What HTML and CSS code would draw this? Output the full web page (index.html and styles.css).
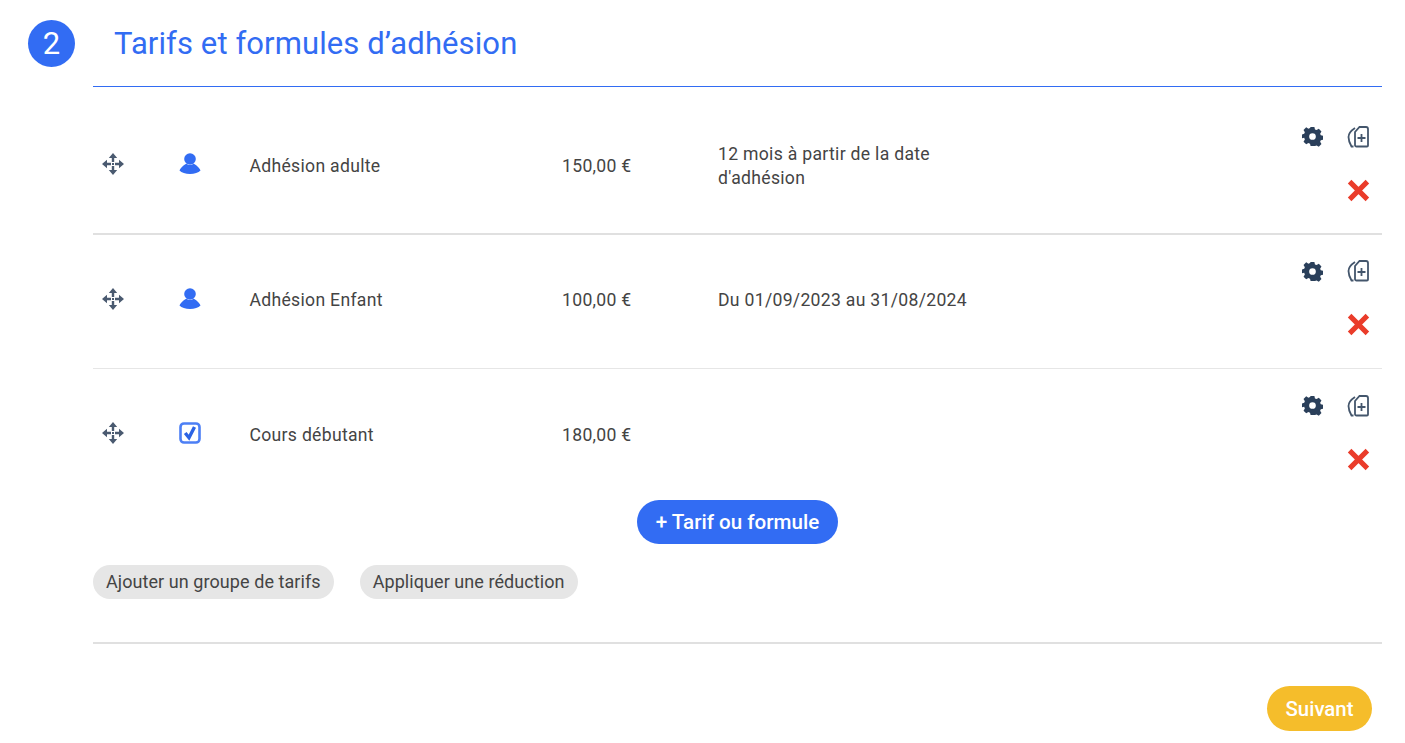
FILE: index.html
```html
<!DOCTYPE html>
<html lang="fr">
<head>
<meta charset="utf-8">
<title>Tarifs</title>
<link rel="stylesheet" href="styles.css">
</head>
<body>
<svg class="defs" width="0" height="0">
  <defs>
    <symbol id="move" viewBox="0 0 22 22">
      <path d="M11 0l4.200 5H6.800zM11 22l-4.200-5h8.400zM0 11l5-4.200v8.400zM22 11l-5 4.200V6.800z" fill="#4a5a70"/>
      <path d="M11 4v5M11 13v5M4 11h5M13 11h5" stroke="#4a5a70" stroke-width="2.400" fill="none"/>
      <rect x="10" y="10" width="2" height="2" fill="#4a5a70"/>
    </symbol>
    <symbol id="user" viewBox="0 0 22 22">
      <circle cx="11" cy="6" r="5.800" fill="#326cf3"/>
      <path d="M7.500 10.500C3.500 13 1 15.500.5 17.500c2 2 6 3.500 10.500 3.500s8.500-1.500 10.500-3.500C21 15.500 18.500 13 14.500 10.500c-1 1-2.200 1.500-3.500 1.500S8.500 11.500 7.500 10.500z" fill="#326cf3"/>
    </symbol>
    <symbol id="check" viewBox="0 0 22 22">
      <rect x="1.500" y="1.500" width="19" height="19" rx="3.500" fill="none" stroke="#4c7ff5" stroke-width="2.600"/>
      <path d="M6.200 11l3.800 4.700L15.500 5" fill="none" stroke="#2c63e4" stroke-width="3.400"/>
    </symbol>
    <symbol id="gear" viewBox="0 0 22 22">
      <path fill="#2a3f5a" fill-rule="evenodd" d="M9 1h4l.6 2.600 1.700.7 2.300-1.400 2.800 2.800-1.400 2.300.7 1.700 2.300.6v4l-2.300.6-.7 1.700 1.400 2.300-2.800 2.800-2.300-1.400-1.700.7L13 21H9l-.6-2.500-1.700-.7-2.300 1.400-2.800-2.800 1.400-2.300-.7-1.700L0 12.800v-4l2.300-.6.7-1.700-1.400-2.300 2.800-2.800 2.300 1.400 1.700-.7zM11 7.500a3.500 3.500 0 1 0 0 7 3.500 3.500 0 0 0 0-7z"/>
    </symbol>
    <symbol id="copy" viewBox="0 0 22 22">
      <path d="M12 1h6.500a2 2 0 0 1 2 2v16.500a1 1 0 0 1-1 1H9a1.500 1.500 0 0 1-1.500-1.500V6z" fill="none" stroke="#44566c" stroke-width="1.800"/>
      <path d="M7.500 2C3 5 1 8 1 11s1 6 3 9.500h2" fill="none" stroke="#44566c" stroke-width="1.800"/>
      <path d="M14 8v8M10 12h8" stroke="#44566c" stroke-width="1.800"/>
    </symbol>
    <symbol id="cross" viewBox="0 0 22 22">
      <path d="M2.500 2.500l17 17M19.500 2.500l-17 17" stroke="#ea3c2a" stroke-width="4.800" fill="none"/>
    </symbol>
  </defs>
</svg>
<main class="page">
  <header class="head">
    <span class="step">2</span>
    <h1 class="title">Tarifs et formules d’adhésion</h1>
  </header>
  <section class="content">
    <div class="row row-first">
      <svg class="i-move"><use href="#move"/></svg>
      <svg class="i-type"><use href="#user"/></svg>
      <span class="name">Adhésion adulte</span>
      <span class="price">150,00 €</span>
      <span class="desc">12 mois à partir de la date d'adhésion</span>
      <div class="acts"><svg class="i-gear"><use href="#gear"/></svg><svg class="i-copy"><use href="#copy"/></svg><svg class="i-cross"><use href="#cross"/></svg></div>
    </div>
    <div class="row row-light">
      <svg class="i-move"><use href="#move"/></svg>
      <svg class="i-type"><use href="#user"/></svg>
      <span class="name">Adhésion Enfant</span>
      <span class="price">100,00 €</span>
      <span class="desc">Du 01/09/2023 au 31/08/2024</span>
      <div class="acts"><svg class="i-gear"><use href="#gear"/></svg><svg class="i-copy"><use href="#copy"/></svg><svg class="i-cross"><use href="#cross"/></svg></div>
    </div>
    <div class="row row-last">
      <svg class="i-move"><use href="#move"/></svg>
      <svg class="i-type"><use href="#check"/></svg>
      <span class="name">Cours débutant</span>
      <span class="price">180,00 €</span>
      <span class="desc"></span>
      <div class="acts"><svg class="i-gear"><use href="#gear"/></svg><svg class="i-copy"><use href="#copy"/></svg><svg class="i-cross"><use href="#cross"/></svg></div>
    </div>
    <div class="add-wrap"><button class="btn-add">+ Tarif ou formule</button></div>
    <div class="chips">
      <button class="chip">Ajouter un groupe de tarifs</button>
      <button class="chip">Appliquer une réduction</button>
    </div>
    <div class="foot"><button class="btn-next">Suivant</button></div>
  </section>
</main>
</body>
</html>
```
FILE: styles.css
```css
* { box-sizing: border-box; }
html, body { margin: 0; padding: 0; background: #fff; }
body { font-family: Roboto, sans-serif; color: #444; overflow: hidden; height: 743px; }
.defs { position: absolute; }
.page { width: 1405px; padding-top: 20px; }
.head { display: flex; align-items: center; height: 47px; padding-left: 28px; }
.step { width: 47px; height: 47px; border-radius: 50%; background: #326cf3; color: #fff; font-size: 31px; display: flex; align-items: center; justify-content: center; }
.title { margin: 0 0 0 39px; font-size: 31px; font-weight: 400; color: #326cf3; letter-spacing: 0.1px; }
.content { margin: 19px 23px 0 93px; border-top: 1px solid #326cf3; }
.row { display: grid; grid-template-columns: 76px 80.500px 312.500px 156px 1fr 92px; align-items: center; font-size: 17.6px; line-height: 24px; letter-spacing: 0.3px; padding-bottom: 4px; }
.row-first { height: 148px; padding-top: 10px; padding-bottom: 0; border-bottom: 2px solid #e0e0e0; }
.row-light { height: 134px; border-bottom: 1px solid #e6e6e6; }
.row-last { height: 134px; }
.row-first span, .row-last span { margin-top: 2px; }
.i-move { width: 22px; height: 22px; margin-left: 9px; margin-bottom: 2px; }
.i-type { width: 22px; height: 22px; margin-left: 10px; margin-bottom: 2px; }
.desc { width: 260px; }
.acts { display: grid; grid-template-columns: 44px 48px; justify-items: center; align-items: center; row-gap: 31px; width: 92px; margin-top: -3px; }
.i-gear { width: 21px; height: 21px; }
.i-copy { width: 23px; height: 22px; }
.i-cross { grid-column: 2; width: 23px; height: 23px; }
button { font-family: inherit; border: 0; padding: 0; }
.add-wrap { display: flex; justify-content: center; margin-top: -3px; }
.btn-add { width: 201px; height: 44px; border-radius: 22px; background: #326cf3; color: #fff; font-size: 20.600px; font-weight: 500; }
.chips { display: flex; gap: 26px; margin-top: 21px; padding-bottom: 43px; border-bottom: 2px solid #e0e0e0; }
.chip { height: 34px; padding: 0 13px 2px; border-radius: 17px; background: #e6e6e6; color: #444; font-size: 18px; letter-spacing: 0.07px; }
.foot { display: flex; justify-content: flex-end; padding: 42px 10px 0 0; }
.btn-next { width: 105px; height: 45px; border-radius: 23px; background: #f5bd2b; color: #fff; font-size: 20.400px; font-weight: 500; }
```
